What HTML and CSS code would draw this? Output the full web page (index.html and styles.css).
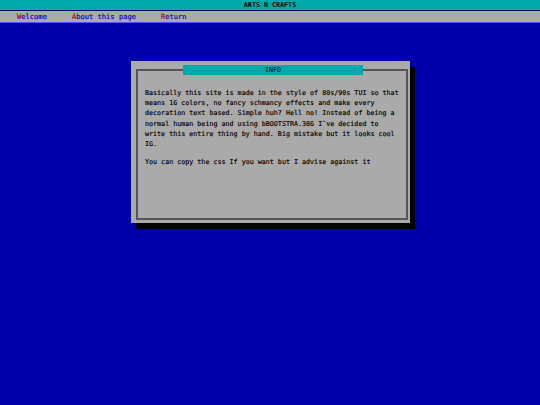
FILE: index.html
```html
<!DOCTYPE html>
<html>
<head>
<meta charset="utf-8">
<link rel="stylesheet" href="styles.css">
</head>
<body>
<header class="titlebar">ARTS N CRAFTS</header>
<nav class="menubar">
  <a class="menu-item" href="#"><span class="hot">W</span>elcome</a>
  <a class="menu-item" href="#"><span class="hot">A</span>bout this page</a>
  <a class="menu-item" href="#"><span class="hot">R</span>eturn</a>
</nav>
<main class="desk">
  <section class="dialog">
    <div class="frame">
      <div class="dialog-title">INFO</div>
      <div class="dialog-body">
        <p class="para">Basically this site is made in the style of 80s/90s TUI so that means 16 colors, no fancy schmancy effects and make every decoration text based. Simple huh? Hell no! Instead of being a normal human being and using bBOOTSTRA.386 I`ve decided to write this entire thing by hand. Big mistake but it looks cool IG.</p>
        <p class="para">You can copy the css If you want but I advise against it</p>
      </div>
    </div>
  </section>
</main>
</body>
</html>
```
FILE: styles.css
```css
html, body {
  margin: 0;
  padding: 0;
}
body {
  background: #0000aa;
  font-family: "DejaVu Sans Mono", "Liberation Mono", monospace;
  font-size: 6.7px;
  color: #000;
  width: 540px;
  height: 405px;
  overflow: hidden;
}
.titlebar {
  height: 10px;
  line-height: 10px;
  background: #00aaaa;
  text-align: center;
  font-weight: bold;
  color: #000;
  border-bottom: 1px solid #000066;
}
.menubar {
  height: 11px;
  line-height: 11px;
  background: #aaaaaa;
  border-bottom: 1px solid #5555ff;
  display: flex;
  gap: 25px;
  padding-left: 17px;
  font-size: 7.1px;
}
.menu-item {
  color: #0000aa;
  text-decoration: none;
  -webkit-text-stroke: 0.15px #0000aa;
}
.hot {
  color: #aa0000;
  -webkit-text-stroke: 0.15px #aa0000;
}
.desk {
  padding: 38px 0 0 131px;
}
.dialog {
  width: 279px;
  height: 162px;
  box-sizing: border-box;
  background: #aaaaaa;
  box-shadow: 5px 6px 0 #000;
  padding: 8px 2px 3px 5px;
  display: flex;
}
.frame {
  flex: 1;
  position: relative;
  border: 2px solid #555555;
}
.dialog-title {
  position: absolute;
  top: -6px;
  left: 45px;
  width: 180px;
  height: 10px;
  line-height: 10px;
  background: #00aaaa;
  text-align: center;
  color: #000;
}
.dialog-body {
  padding: 17px 0 0 7px;
  -webkit-text-stroke: 0.15px #000;
}
.para {
  margin: 0 0 8px 0;
  width: 63.5ch;
  line-height: 10.2px;
}
```
